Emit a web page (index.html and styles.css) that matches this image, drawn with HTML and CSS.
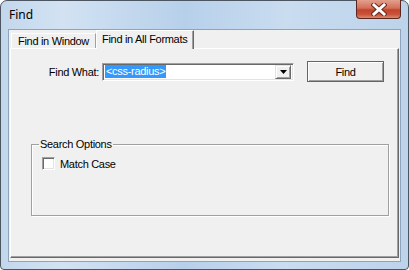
FILE: index.html
```html
<!DOCTYPE html>
<html>
<head>
<meta charset="utf-8">
<link rel="stylesheet" href="styles.css">
</head>
<body>
<div class="window">
  <div class="titlebar">
    <span class="title">Find</span>
    <div class="close">
      <svg width="16" height="13" viewBox="0 0 16 13"><path d="M3 2 L13 11 M13 2 L3 11" stroke="#6b2a1e" stroke-width="5" stroke-linecap="square" fill="none"/><path d="M3 2 L13 11 M13 2 L3 11" stroke="#fff" stroke-width="3" stroke-linecap="square" fill="none"/></svg>
    </div>
  </div>
  <div class="client">
    <div class="tabs">
      <div class="tab">Find in Window</div>
      <div class="tab active">Find in All Formats</div>
    </div>
    <div class="panel">
      <div class="row">
        <label class="label">Find What:</label>
        <div class="combo">
          <span class="sel">&lt;css-radius&gt;</span>
          <div class="drop"><svg width="7" height="4" viewBox="0 0 7 4"><path d="M0 0 H7 L3.5 4 Z" fill="#000"/></svg></div>
        </div>
        <div class="btn">Find</div>
      </div>
      <fieldset class="group">
        <legend>Search Options</legend>
        <div class="check"><span class="box"></span><span>Match Case</span></div>
      </fieldset>
    </div>
  </div>
</div>
</body>
</html>
```
FILE: styles.css
```css
html, body { margin: 0; padding: 0; background: #fff; }
body { width: 409px; height: 270px; overflow: hidden; }
.window {
  box-sizing: border-box;
  width: 409px; height: 270px;
  border: 1px solid #4c5663;
  border-radius: 7px 7px 4px 4px;
  background: linear-gradient(90deg, #c3d7ec 0%, #d2e2f3 15%, #b7d0ea 45%, #c9dcf0 70%, #bcd3ea 100%);
  display: flex; flex-direction: column;
  padding: 0 7px 7px 7px;
  font-family: "Liberation Sans", Arial, sans-serif;
  font-size: 11px;
  letter-spacing: -0.3px;
  color: #000;
}
.titlebar {
  height: 28px;
  display: flex; align-items: flex-start;
  position: relative;
}
.title {
  font-family: "Noto Sans", "DejaVu Sans", sans-serif;
  font-size: 12px;
  letter-spacing: 0;
  margin-top: 5px; margin-left: 1px;
  color: #000;
}
.close {
  position: absolute; right: 0; top: -1px;
  width: 45px; height: 19px;
  box-sizing: border-box;
  border: 1px solid #5a2620;
  border-top: none;
  border-radius: 0 0 4px 4px;
  background: linear-gradient(180deg, #e3a08f 0%, #d46f58 45%, #c24329 55%, #c8533a 80%, #dc8a6d 100%);
  display: flex; align-items: center; justify-content: center;
}
.client {
  flex: 1;
  background: #f0f0f0;
  border: 1px solid #8ea3bc;
  padding: 0 1px 3px 1px;
  display: flex; flex-direction: column;
}
.tabs { display: flex; align-items: flex-end; height: 18px; padding-left: 1px; }
.tab {
  box-sizing: border-box;
  height: 15px;
  padding: 0 6px 0 6px;
  border-top: 1px solid #fff;
  border-left: 1px solid #fff;
  border-right: 1px solid #a0a0a0;
  line-height: 14px;
  background: #f0f0f0;
}
.tab.active {
  height: 19px;
  margin-bottom: -1px;
  position: relative; z-index: 1;
  padding: 1px 6px 0 5px;
  border-right: 1px solid #696969;
  box-shadow: inset -1px 0 0 #a0a0a0;
}
.panel {
  flex: 1;
  box-sizing: border-box;
  border-top: 1px solid #fff;
  border-left: 1px solid #fff;
  border-right: 1px solid #696969;
  border-bottom: 1px solid #696969;
  box-shadow: inset -1px -1px 0 #a0a0a0;
  padding: 12px 0 0 0;
}
.row { display: flex; align-items: center; height: 21px; }
.label { width: 88px; text-align: right; padding-right: 3px; }
.combo {
  box-sizing: border-box;
  width: 192px; height: 18px;
  border-top: 1px solid #a0a0a0; border-left: 1px solid #a0a0a0;
  border-right: 1px solid #fff; border-bottom: 1px solid #fff;
  box-shadow: inset 1px 1px 0 #696969, inset -1px -1px 0 #e3e3e3;
  background: #fff;
  display: flex; align-items: center;
  padding: 0 2px 0 2px;
}
.sel { background: #3399ff; color: #fff; padding: 0 1px; line-height: 13px; }
.drop {
  margin-left: auto;
  box-sizing: border-box;
  width: 16px; height: 14px;
  background: #f0f0f0;
  border-top: 1px solid #e3e3e3; border-left: 1px solid #e3e3e3;
  border-right: 1px solid #696969; border-bottom: 1px solid #696969;
  box-shadow: inset 1px 1px 0 #fff, inset -1px -1px 0 #a0a0a0;
  display: flex; align-items: center; justify-content: center;
}
.btn {
  margin-left: 13px;
  box-sizing: border-box;
  width: 77px; height: 21px;
  border: 1px solid #646464;
  box-shadow: inset 1px 1px 0 #fff, inset -1px -1px 0 #a0a0a0;
  background: #f0f0f0;
  display: flex; align-items: center; justify-content: center;
}
.group {
  margin: 56px 9px 0 20px;
  height: 78px;
  box-sizing: border-box;
  border: 1px solid #a0a0a0;
  box-shadow: 1px 1px 0 #fff, inset 1px 1px 0 #fff;
  padding: 0 10px;
}
.group legend { padding: 0 1px; margin-left: -3px; line-height: 12px; }
.check { display: flex; align-items: center; gap: 5px; margin-top: 7px; }
.box {
  box-sizing: border-box;
  width: 13px; height: 13px;
  background: #fff;
  border-top: 1px solid #a0a0a0; border-left: 1px solid #a0a0a0;
  border-right: 1px solid #fff; border-bottom: 1px solid #fff;
  box-shadow: inset 1px 1px 0 #696969, inset -1px -1px 0 #e3e3e3;
}
```
